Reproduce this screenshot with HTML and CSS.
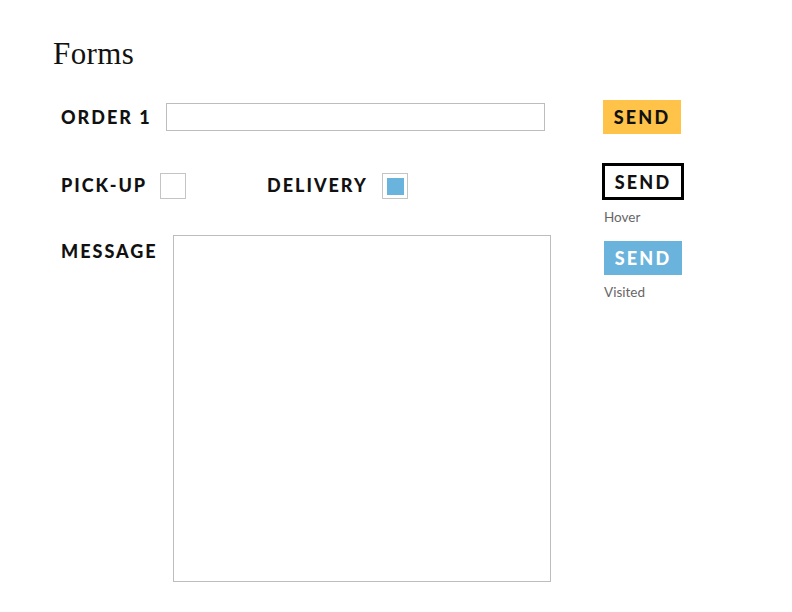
FILE: index.html
```html
<!DOCTYPE html>
<html>
<head>
<meta charset="utf-8">
<link rel="stylesheet" href="styles.css">
</head>
<body>
<main class="page">
  <h1 class="title">Forms</h1>
  <div class="content">
    <form class="form">
      <div class="row row-order">
        <label class="label label-order">ORDER 1</label>
        <div class="input"></div>
      </div>
      <div class="row row-options">
        <label class="label label-pickup">PICK-UP</label>
        <span class="check"></span>
        <label class="label label-delivery">DELIVERY</label>
        <span class="check checked"><span class="check-fill"></span></span>
      </div>
      <div class="row row-message">
        <label class="label label-message">MESSAGE</label>
        <div class="textarea"></div>
      </div>
    </form>
    <aside class="buttons">
      <div class="btn btn-default">SEND</div>
      <div class="btn btn-hover">SEND</div>
      <div class="caption">Hover</div>
      <div class="btn btn-visited">SEND</div>
      <div class="caption">Visited</div>
    </aside>
  </div>
</main>
</body>
</html>
```

FILE: styles.css
```css
html, body {
  margin: 0;
  padding: 0;
  background: #ffffff;
}

.page {
  padding: 36px 0 0 53px;
  width: 792px;
  height: 612px;
  box-sizing: border-box;
}

.title {
  margin: 0;
  font-family: "Liberation Serif", serif;
  font-weight: 400;
  font-size: 31px;
  letter-spacing: 0.4px;
  line-height: 36px;
  color: #111;
}

.content {
  display: flex;
  margin-top: 28px;
}

.form {
  display: flex;
  flex-direction: column;
  width: 550px;
  padding-left: 8px;
}

.row {
  display: flex;
}

.label {
  font-family: "Lato", sans-serif;
  font-weight: 900;
  font-size: 18px;
  letter-spacing: 2px;
  color: #111;
  line-height: 20px;
  flex: none;
}

.row-order {
  align-items: center;
  height: 28px;
  margin-top: 3px;
}

.label-order {
  width: 105px;
}

.input {
  width: 377px;
  height: 26px;
  border: 1px solid #bdbdbd;
}

.row-options {
  align-items: center;
  margin-top: 42px;
  height: 26px;
}

.label-pickup {
  width: 99px;
  margin-top: -2px;
}

.check {
  display: flex;
  align-items: center;
  justify-content: center;
  width: 24px;
  height: 24px;
  border: 1px solid #c4c4c4;
}

.label-delivery {
  margin-left: 81px;
  width: 115px;
  margin-top: -2px;
}

.check-fill {
  width: 17px;
  height: 17px;
  background: #6ab3dc;
}

.row-message {
  margin-top: 36px;
  align-items: flex-start;
}

.label-message {
  width: 112px;
  margin-top: 6px;
}

.textarea {
  width: 376px;
  height: 345px;
  border: 1px solid #bdbdbd;
}

.buttons {
  display: flex;
  flex-direction: column;
  align-items: flex-start;
  margin-left: -8px;
}

.btn {
  font-family: "Lato", sans-serif;
  font-weight: 900;
  font-size: 18px;
  letter-spacing: 2.2px;
  box-sizing: border-box;
  display: flex;
  align-items: center;
  justify-content: center;
}

.btn-default {
  width: 78px;
  height: 34px;
  background: #ffc34a;
  color: #111;
}

.btn-hover {
  margin-top: 29px;
  margin-left: -1px;
  width: 82px;
  height: 37px;
  border: 3px solid #000;
  color: #111;
}

.btn-visited {
  margin-top: 16px;
  margin-left: 1px;
  width: 78px;
  height: 34px;
  background: #6ab3dc;
  color: #fff;
}

.caption {
  font-family: "Lato", sans-serif;
  font-size: 13.5px;
  color: #666;
  margin-top: 9px;
  margin-left: 1px;
  line-height: 16px;
}
```
